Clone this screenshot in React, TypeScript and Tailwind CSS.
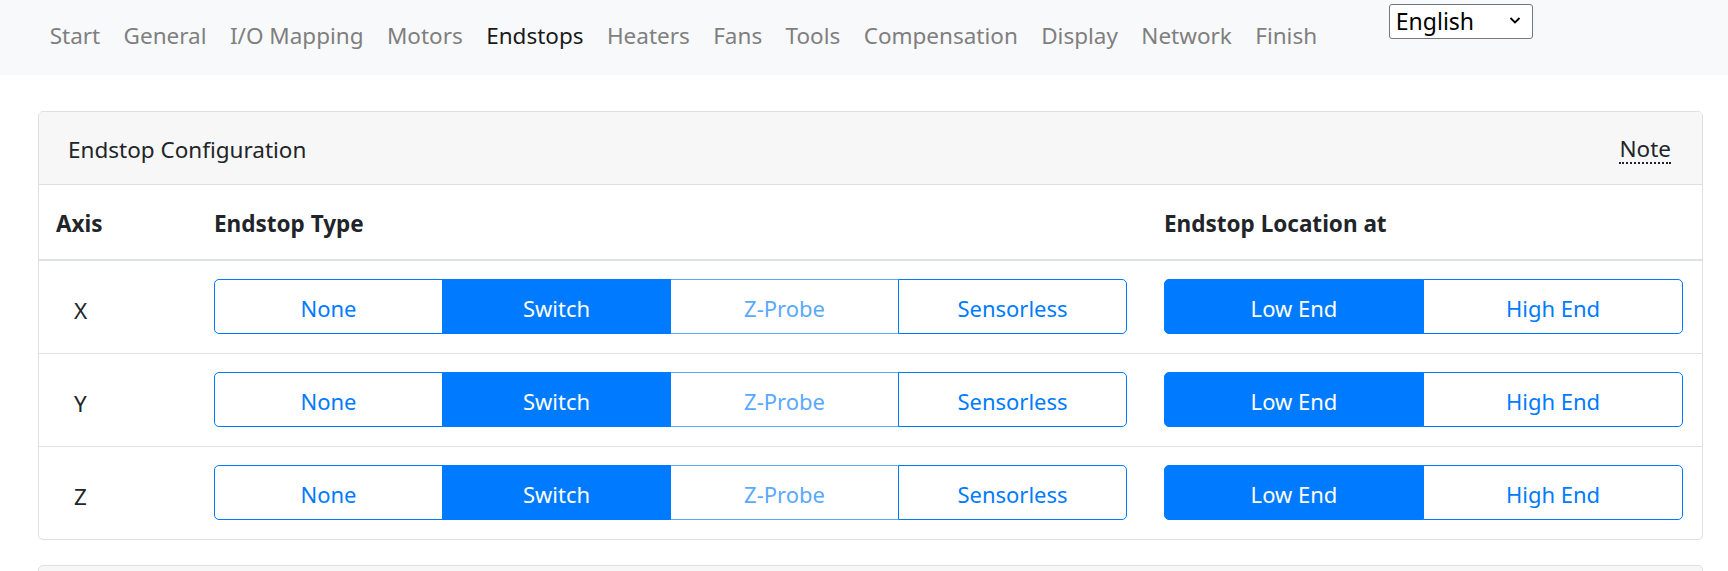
import { useState } from "react";

const navItems = [
  "Start",
  "General",
  "I/O Mapping",
  "Motors",
  "Endstops",
  "Heaters",
  "Fans",
  "Tools",
  "Compensation",
  "Display",
  "Network",
  "Finish",
];

const types = ["None", "Switch", "Z-Probe", "Sensorless"];
const locations = ["Low End", "High End"];

function BtnGroup({
  options,
  value,
  disabled = [],
  onChange,
}: {
  options: string[];
  value: string;
  disabled?: string[];
  onChange: (v: string) => void;
}) {
  return (
    <div className="flex w-full">
      {options.map((opt, i) => {
        const active = opt === value;
        const off = disabled.includes(opt);
        const first = i === 0;
        const last = i === options.length - 1;
        return (
          <button
            key={opt}
            type="button"
            disabled={off}
            onClick={() => onChange(opt)}
            className={[
              "flex-1 h-[55px] border text-[22px] leading-none pt-[3px]",
              first ? "rounded-l-[5px]" : "-ml-px",
              last ? "rounded-r-[5px]" : "",
              active
                ? "bg-[#007bff] border-[#007bff] text-white relative z-10"
                : off
                ? "bg-white border-[#59a9ff] text-[#59a9ff]"
                : "bg-white border-[#007bff] text-[#007bff] relative z-10",
            ].join(" ")}
          >
            {opt}
          </button>
        );
      })}
    </div>
  );
}

export default function App() {
  const [rows, setRows] = useState([
    { axis: "X", type: "Switch", loc: "Low End" },
    { axis: "Y", type: "Switch", loc: "Low End" },
    { axis: "Z", type: "Switch", loc: "Low End" },
  ]);

  const update = (idx: number, key: "type" | "loc", v: string) => {
    setRows(prev => prev.map((r, i) => (i === idx ? { ...r, [key]: v } : r)));
  };

  return (
    <div
      className="min-h-screen bg-white text-[#212529] text-[22.5px]"
      style={{ fontFamily: '"Noto Sans", "Open Sans", sans-serif' }}
    >
      {/* top navigation */}
      <nav className="h-[75px] bg-[#f8f9fa] flex items-start pl-[38px]">
        <ul className="flex items-center h-[72px]">
          {navItems.map(item => (
            <li key={item}>
              <a
                href="#"
                className={`px-[11.7px] ${
                  item === "Endstops" ? "text-[#1a1a1a]" : "text-[#7f7f7f]"
                }`}
              >
                {item}
              </a>
            </li>
          ))}
        </ul>
        <div className="relative ml-[60px] mt-[4px]">
          <select
            defaultValue="English"
            className="appearance-none w-[144px] h-[35px] border border-[#767676] rounded-[3px] bg-white pl-[6px] py-0 text-[23px] text-black leading-[31px]"
          >
            <option>English</option>
            <option>Deutsch</option>
          </select>
          <svg
            className="pointer-events-none absolute right-[12px] top-[12px]"
            width="12"
            height="9"
            viewBox="0 0 12 9"
            fill="none"
            stroke="#000"
            strokeWidth="1.8"
          >
            <path d="M1.5 2l4.5 4.5L10.5 2" />
          </svg>
        </div>
      </nav>

      <div className="pt-[36px] pl-[38px] pr-[25px]">
        {/* card */}
        <div className="border border-[#dfdfdf] rounded-[5px] overflow-hidden">
          <div className="h-[73px] bg-[#f7f7f7] border-b border-[#dfdfdf] flex items-center justify-between pl-[29px] pr-[31px] pt-[4px]">
            <span>Endstop Configuration</span>
            <abbr
              title="Note"
              className="no-underline border-b-2 border-dotted border-[#212529] leading-[26px]"
            >
              Note
            </abbr>
          </div>
          <table className="w-full border-collapse">
            <thead>
              <tr className="h-[75px] border-b-2 border-[#dee2e6]">
                <th className="w-[158px] text-left font-bold pl-[17px] pt-[4px]">Axis</th>
                <th className="w-[950px] text-left font-bold pl-[17px] pt-[4px]">Endstop Type</th>
                <th className="text-left font-bold pl-[17px] pt-[4px]">Endstop Location at</th>
              </tr>
            </thead>
            <tbody>
              {rows.map((r, idx) => (
                <tr
                  key={r.axis}
                  className={`h-[93px] ${idx > 0 ? "border-t border-[#dee2e6]" : ""}`}
                >
                  <td className="pl-[35px] pt-[8px]">{r.axis}</td>
                  <td className="pl-[17px] pr-[20px]">
                    <BtnGroup
                      options={types}
                      value={r.type}
                      disabled={["Z-Probe"]}
                      onChange={v => update(idx, "type", v)}
                    />
                  </td>
                  <td className="pl-[17px] pr-[19px]">
                    <BtnGroup
                      options={locations}
                      value={r.loc}
                      onChange={v => update(idx, "loc", v)}
                    />
                  </td>
                </tr>
              ))}
            </tbody>
          </table>
        </div>

        {/* next card, cut off */}
        <div className="mt-[25px] h-[60px] border border-[#dfdfdf] rounded-[5px] bg-[#f7f7f7]" />
      </div>
    </div>
  );
}
